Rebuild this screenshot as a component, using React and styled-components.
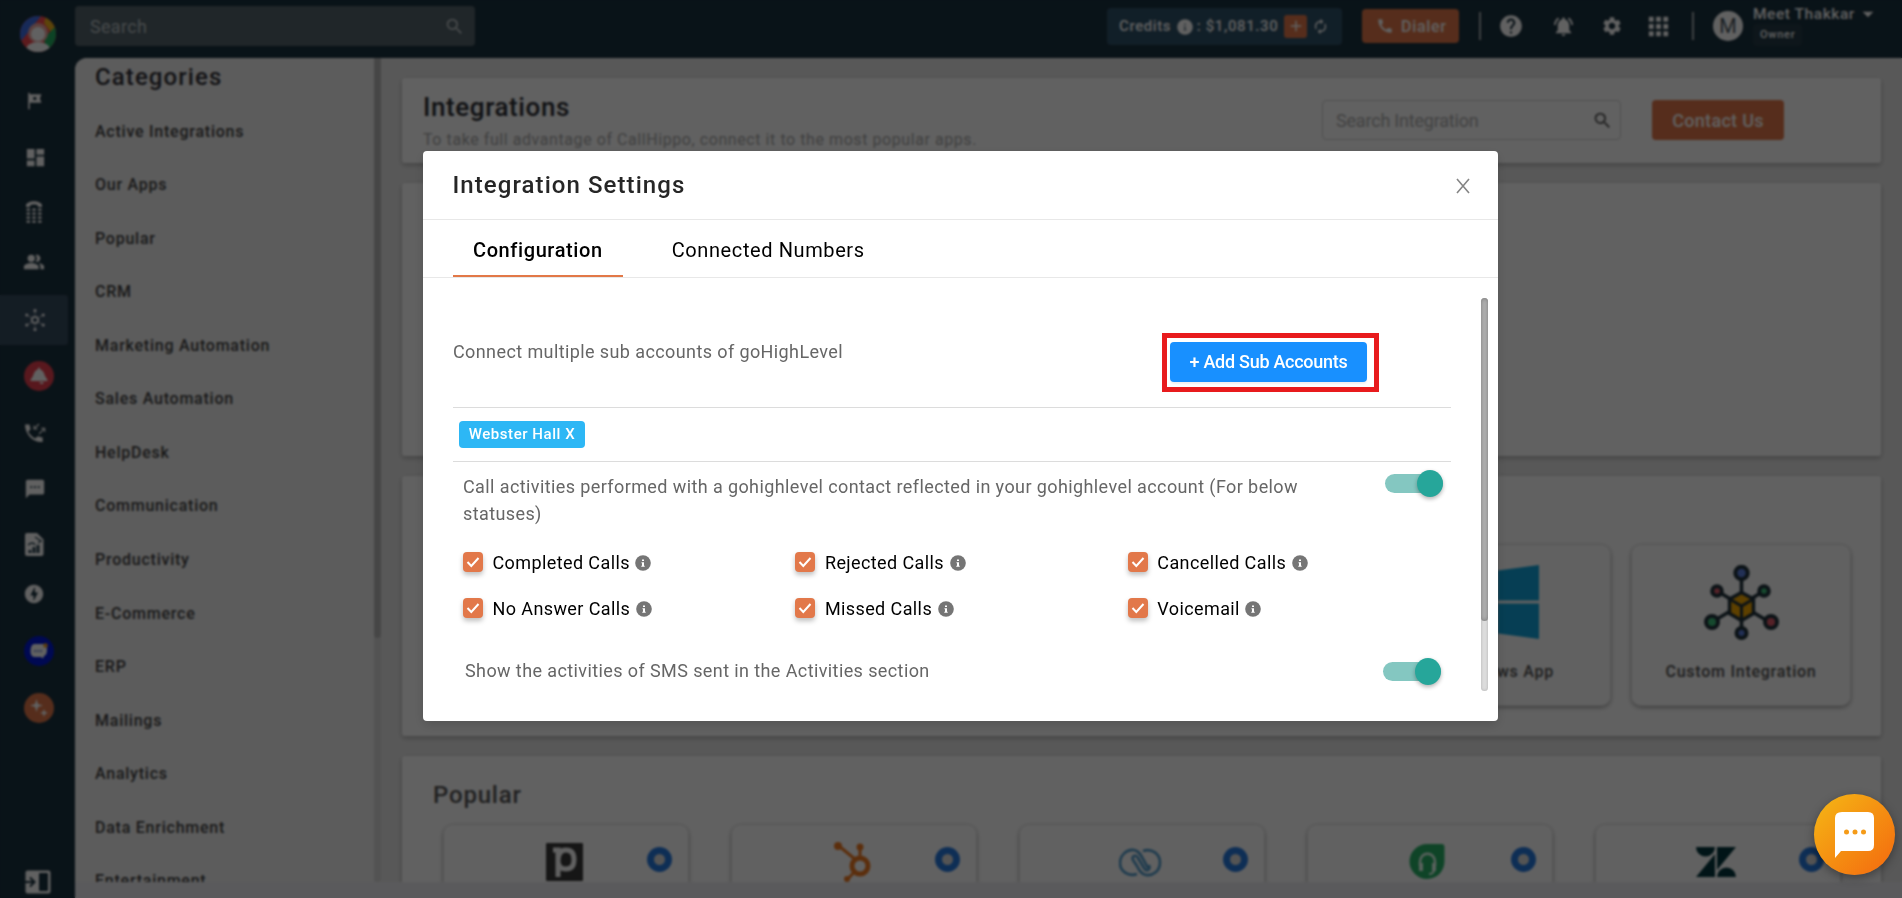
import React from "react";
import styled, { createGlobalStyle, css } from "styled-components";
import {
  MdTour, MdDashboard, MdPeopleAlt, MdSms, MdOfflineBolt, MdSearch, MdCall, MdHelp,
  MdNotificationsActive, MdSettings, MdApps, MdAutorenew, MdArrowDropDown, MdAdd,
} from "react-icons/md";

const GlobalStyle = createGlobalStyle`
  *, *::before, *::after { box-sizing: border-box; }
  body {
    margin: 0;
    overflow: hidden;
    font-family: Roboto, "Liberation Sans", sans-serif;
    background: #1b3240;
  }
  svg { display: block; flex: none; }
`;

/* ---------- shell ---------- */
const Shell = styled.div`
  display: flex;
  width: 1902px;
  height: 898px;
  background: #1a323f;
  overflow: hidden;
`;

const Rail = styled.nav`
  display: flex;
  flex-direction: column;
  width: 75px;
  height: 898px;
  padding: 16px 0 1px;
  color: #fff;
`;

const Logo = styled.div`
  display: flex;
  justify-content: center;
  height: 36px;
`;

const RailItem = styled.a`
  display: flex;
  align-items: center;
  justify-content: center;
  flex: none;
  width: 68px;
  height: ${(p) => (p.$active ? 50 : 30)}px;
  margin-top: ${(p) => p.$gap};
  border-radius: 0 3px 3px 0;
  background: ${(p) => (p.$active ? "#364c60" : "transparent")};
  padding-left: ${(p) => p.$shift || 0}px;
`;

const RailBadge = styled.span`
  display: flex;
  align-items: center;
  justify-content: center;
  width: 30px;
  height: 30px;
  border-radius: 50%;
  background: ${(p) => p.$color};
`;

const Column = styled.div`
  display: flex;
  flex-direction: column;
  flex: 1;
  min-width: 0;
`;

/* ---------- top bar ---------- */
const TopBar = styled.header`
  display: flex;
  align-items: center;
  height: 58px;
  padding-bottom: 6px;
  color: #fff;
`;

const GlobalSearch = styled.div`
  display: flex;
  align-items: center;
  justify-content: space-between;
  width: 400px;
  height: 40px;
  padding: 0 10px 0 15px;
  border-radius: 4px;
  background: #54646c;
  color: #bcc3c6;
  font-size: 18px;
  letter-spacing: 0.3px;
`;

const Credits = styled.div`
  display: flex;
  align-items: center;
  width: 235px;
  height: 37px;
  margin-left: 632px;
  padding-left: 12px;
  border-radius: 4px;
  background: #2f5269;
  font-size: 15px;
  font-weight: 500;
  letter-spacing: 0.6px;
  white-space: pre;

  > svg:first-of-type { margin: 2px 0 0 1px; }
`;

const AddCredit = styled.span`
  display: flex;
  align-items: center;
  justify-content: center;
  width: 23px;
  height: 23px;
  margin: 0 5px 0 6px;
  border-radius: 3px;
  background: #e2784a;
`;

const DialerButton = styled.button`
  display: flex;
  align-items: center;
  gap: 7px;
  width: 97px;
  height: 34px;
  margin-left: 20px;
  padding: 0 0 0 14px;
  border: 0;
  border-radius: 4px;
  background: #e2784a;
  color: #fff;
  font: 500 16px Roboto, sans-serif;
  letter-spacing: 0.7px;
`;

const Divider = styled.i`
  width: 2px;
  height: 28px;
  margin-left: ${(p) => p.$left}px;
  background: #a5acb0;
`;

const TopIcon = styled.span`
  display: flex;
  justify-content: center;
  width: 26px;
  margin-left: ${(p) => p.$left}px;
`;

const Avatar = styled.span`
  display: flex;
  align-items: center;
  justify-content: center;
  width: 30px;
  height: 30px;
  margin-left: 19px;
  border-radius: 50%;
  background: #fff;
  color: #46545c;
  font-size: 20px;
`;

const User = styled.div`
  display: flex;
  flex-direction: column;
  align-items: flex-start;
  height: 52px;
  margin-left: 10px;
  padding-top: 4px;
`;

const UserName = styled.div`
  display: flex;
  align-items: center;
  height: 20px;
  font-size: 15.5px;
  font-weight: 500;
  letter-spacing: 0.55px;
  white-space: nowrap;
`;

const Role = styled.span`
  height: 22px;
  padding: 0 7px;
  border-radius: 4px;
  background: #253b47;
  font-size: 11px;
  font-weight: 500;
  line-height: 22px;
  letter-spacing: 0.75px;
`;

/* ---------- page body ---------- */
const Body = styled.div`
  display: flex;
  height: 824px;
  border-top-left-radius: 12px;
  background: #e8e8e8;
  overflow: hidden;
`;

const BottomStrip = styled.div`
  height: 16px;
  background: #ededf2;
`;

const Categories = styled.aside`
  width: 299px;
  padding: 0.5px 0 0 20px;
  background: #f2f2f2;
`;

const CategoriesTitle = styled.h2`
  height: 46px;
  margin: 0;
  color: #303036;
  font-size: 24px;
  font-weight: 500;
  line-height: 36px;
  letter-spacing: 1.1px;
`;

const CategoryLink = styled.div`
  height: 53.57px;
  color: #414141;
  font-size: 16px;
  font-weight: 500;
  line-height: 53.57px;
  letter-spacing: 0.76px;
`;

const PageTrack = styled.div`
  width: 7px;
  height: 824px;
  border-radius: 4px;
  background: #dadada;
`;

const PageThumb = styled.div`
  height: 580px;
  border-radius: 0 0 4px 4px;
  background: #b9b9b9;
`;

const Content = styled.main`
  display: flex;
  flex-direction: column;
  gap: 20px;
  width: 1501px;
  padding: 20px 0 0 21px;
`;

const Card = styled.section`
  flex: none;
  width: 1479px;
  height: ${(p) => p.$h}px;
  border-radius: 3px;
  background: #fff;
  box-shadow: 0 2px 5px rgba(0, 0, 0, 0.25);
`;

const IntroCard = styled(Card)`
  display: flex;
  padding: 22px 0 0 21px;
`;

const Intro = styled.div`
  width: 899px;
`;

const IntroTitle = styled.h1`
  margin: -8px 0 0;
  color: #2b2d33;
  font-size: 26px;
  font-weight: 500;
  line-height: 31px;
  letter-spacing: 0.6px;
`;

const IntroText = styled.p`
  margin: 6px 0 0;
  color: #a8a8a8;
  font-size: 16px;
  line-height: 22px;
  letter-spacing: 0.57px;
  white-space: nowrap;
`;

const IntegrationSearch = styled.div`
  display: flex;
  align-items: center;
  justify-content: space-between;
  width: 299px;
  height: 40px;
  padding: 0 7px 0 13px;
  border: 1px solid #d2d2d2;
  border-radius: 4px;
  color: #aeaeae;
  font-size: 18px;
  letter-spacing: -0.2px;
`;

const ContactButton = styled.button`
  width: 132px;
  height: 40px;
  margin-left: 31px;
  border: 0;
  border-radius: 4px;
  background: #e2784a;
  color: #fff;
  font: 500 18px Roboto, sans-serif;
  letter-spacing: 0.3px;
`;

const AppsRow = styled.div`
  display: flex;
  justify-content: flex-end;
  gap: 20px;
  padding: 68px 30px 0 0;
`;

const tile = css`
  border: 1px solid #e2e2e2;
  border-radius: 10px;
  box-shadow: 0 2px 4px rgba(0, 0, 0, 0.32);
`;

const AppTile = styled.div`
  ${tile}
  display: flex;
  flex-direction: column;
  align-items: center;
  justify-content: space-between;
  width: 220px;
  height: 162px;
  padding: 20px 0 23px;
  color: #505050;
  font-size: 16px;
  line-height: 20px;
  letter-spacing: 0.75px;
  font-weight: 500;
`;

const PopularTitle = styled.h2`
  height: 68px;
  margin: 0;
  padding: 24px 0 0 31px;
  color: #555;
  font-size: 24px;
  font-weight: 500;
  line-height: 30px;
  letter-spacing: 0.8px;
`;

const PopularRow = styled.div`
  display: flex;
  gap: 42px;
  padding-left: 41px;
`;

const PopularTile = styled.div`
  ${tile}
  display: flex;
  justify-content: space-between;
  flex: none;
  width: 246px;
  height: 163px;
  padding: 16px 16px 0 99px;
`;

const InfoRing = styled.span`
  width: 25px;
  height: 25px;
  margin-top: 6px;
  border: 7.5px solid #267ae0;
  border-radius: 50%;
  background: #ddd;
`;

/* ---------- modal ---------- */
const Overlay = styled.div`
  position: fixed;
  inset: 0;
  display: flex;
  align-items: flex-start;
  padding: 151px 0 0 423px;
  background: rgba(0, 0, 0, 0.62);
  backdrop-filter: blur(1.2px);
`;

const Dialog = styled.div`
  width: 1075px;
  height: 570px;
  border-radius: 4px;
  background: #fff;
  box-shadow: 0 4px 12px rgba(0, 0, 0, 0.15);
`;

const DialogHeader = styled.div`
  display: flex;
  align-items: center;
  justify-content: space-between;
  height: 69px;
  padding: 0 27px 0 29.5px;
  border-bottom: 1px solid #e8e8e8;
`;

const DialogTitle = styled.div`
  color: #262626;
  font-size: 24px;
  font-weight: 500;
  letter-spacing: 1.07px;
`;

const Tabs = styled.div`
  display: flex;
  height: 58px;
  padding-left: 30px;
  border-bottom: 1px solid #e8e8e8;
`;

const Tab = styled.div`
  height: 57px;
  padding: 0 20px;
  margin-right: 29px;
  border-bottom: 2px solid ${(p) => (p.$active ? "#e27847" : "transparent")};
  color: #000;
  font-size: 20px;
  font-weight: ${(p) => (p.$active ? 500 : 400)};
  line-height: 61px;
  letter-spacing: 0.6px;
`;

const DialogBody = styled.div`
  display: flex;
  padding: 20px 0 0 30px;
`;

const Settings = styled.div`
  width: 998px;
`;

const ConnectRow = styled.div`
  display: flex;
  justify-content: space-between;
  height: 110px;
  padding: 35px 72px 0 0;
  border-bottom: 1px solid #dcdcdc;
`;

const Text = styled.div`
  width: ${(p) => (p.$w ? p.$w + "px" : "auto")};
  padding-top: ${(p) => p.$top || 0}px;
  color: #666;
  font-size: 18px;
  line-height: 27px;
  letter-spacing: 0.4px;
`;

const Highlight = styled.div`
  width: 217px;
  height: 59px;
  padding: 4px 3px;
  border: 5px solid #e81b1d;
`;

const AddButton = styled.button`
  width: 197px;
  height: 40px;
  padding: 0 0 2px;
  border: 0;
  border-radius: 4px;
  background: #1890ff;
  box-shadow: 0 2px 2px rgba(0, 0, 0, 0.06);
  color: #fff;
  font: 500 18px Roboto, sans-serif;
  letter-spacing: -0.28px;
`;

const TagRow = styled.div`
  height: 54px;
  padding: 13px 0 0 6px;
  border-bottom: 1px solid #dcdcdc;
`;

const Tag = styled.span`
  display: block;
  width: 126px;
  height: 27px;
  border-radius: 4px;
  background: #2db7f5;
  color: #fff;
  font-size: 15px;
  font-weight: 500;
  line-height: 26px;
  letter-spacing: 0.55px;
  text-align: center;
`;

const OptionRow = styled.div`
  display: flex;
  justify-content: space-between;
  padding: ${(p) => p.$pad};
`;

const Switch = styled.span`
  display: flex;
  align-items: center;
  justify-content: flex-end;
  width: 58px;
  height: 19px;
  margin-top: ${(p) => p.$top}px;
  border-radius: 10px;
  background: #84c7c1;

  &::after {
    content: "";
    flex: none;
    width: 26px;
    height: 27px;
    border-radius: 50%;
    background: #26a69a;
    box-shadow: 0 2px 4px rgba(0, 0, 0, 0.3);
  }
`;

const StatusGrid = styled.div`
  display: grid;
  grid-template-columns: repeat(3, 332.4px);
  grid-auto-rows: 46px;
  padding: 25px 0 0 10px;
`;

const Status = styled.div`
  display: flex;
  align-items: center;
  height: 20px;
  color: #000;
  font-size: 18px;
  letter-spacing: 0.4px;

  > svg { color: #757575; margin: 1px 0 0 5.5px; }
`;

const Check = styled.span`
  display: flex;
  align-items: center;
  justify-content: center;
  width: 20px;
  height: 20px;
  margin-right: 9.500px;
  border-radius: 4px;
  background: #e2784a;
  box-shadow: 0 3px 5px rgba(0, 0, 0, 0.25);
`;

const ScrollTrack = styled.div`
  width: 7px;
  height: 393px;
  margin-left: 30px;
  border-radius: 4px;
  background: #dcdcdc;
  box-shadow: inset 0 0 3px rgba(0, 0, 0, 0.2);
`;

const ScrollThumb = styled.div`
  height: 323px;
  border-radius: 4px;
  background: #b3b3b3;
  box-shadow: inset 0 0 4px rgba(0, 0, 0, 0.35);
`;

const ChatButton = styled.button`
  position: fixed;
  right: 7px;
  bottom: 23px;
  display: flex;
  align-items: center;
  justify-content: center;
  width: 81px;
  height: 81px;
  padding: 0;
  border: 0;
  border-radius: 50%;
  background: linear-gradient(135deg, #f5b014 10%, #f4700f 90%);
  box-shadow: 0 3px 10px rgba(0, 0, 0, 0.35);
`;

/* ---------- drawings ---------- */
const InfoDot = ({ mark = "#fff" }) => (
  <svg width="16" height="16" viewBox="0 0 16 16">
    <circle cx="8" cy="8" r="7.800" fill="currentColor" />
    <path d="M7 4.500h2v1.600H7zM6.500 7.200H9v3.500h.7v1H6.300v-1H7V8.200h-.5z" fill={mark} />
  </svg>
);

const LogoMark = () => (
  <svg width="36" height="36" viewBox="0 0 36 36">
    <defs><clipPath id="lg"><circle cx="18" cy="18" r="18" /></clipPath></defs>
    <g clipPath="url(#lg)">
      <rect width="36" height="36" fill="#f5484f" />
      <path d="M0 0H21L2 24H0z" fill="#3d6fe8" />
      <path d="M26 0L36 0V14L30 15 24 7z" fill="#f2b21b" />
      <path d="M24 22L36 10V36H26z" fill="#21b062" />
      <circle cx="18" cy="17" r="10" fill="#eda9a4" />
      <circle cx="18" cy="18" r="7" fill="#fff" />
      <ellipse cx="18" cy="34" rx="12" ry="8" fill="#fff" />
    </g>
  </svg>
);

const DeskPhone = () => (
  <svg width="18" height="24" viewBox="0 0 18 24" fill="#fff">
    <path d="M1 7V5C3 0 15 0 17 5v2h-4V5.500C11 4 7 4 5 5.500V7z" />
    {[8.5, 12.5, 16.5, 20.5].map((y) => [1.5, 7.2, 13].map((x) => (
      <rect key={x + "-" + y} x={x} y={y} width="3.600" height="2.200" rx=".4" />
    )))}
  </svg>
);

const HubMark = () => (
  <svg width="22" height="24" viewBox="0 0 22 24" fill="#fff">
    <circle cx="11" cy="12" r="3.200" fill="none" stroke="#fff" strokeWidth="1.800" />
    <circle cx="11" cy="2.500" r="1.600" /><circle cx="11" cy="21.500" r="1.600" />
    <circle cx="2.800" cy="7" r="1.600" /><circle cx="19.200" cy="7" r="1.600" />
    <circle cx="2.800" cy="17" r="1.600" /><circle cx="19.200" cy="17" r="1.600" />
    <path d="M4 7.800L7 9.500M18 7.800L15 9.500M4 16.200L7 14.500M18 16.200L15 14.500M11 4v3M11 17v3" stroke="#fff" strokeWidth=".6" />
  </svg>
);

const BellDome = () => (
  <svg width="18" height="18" viewBox="0 0 18 18" fill="#fff">
    <path d="M9 .5c.8 0 1 .7 1 1.800 2.800 1 4.200 3.500 5 6.700L17.500 13v1H.5v-1L3 9c.8-3.200 2.200-5.700 5-6.700C8 1.200 8.200.5 9 .5z" />
    <path d="M9 15h5l-1.500 2H11z" />
  </svg>
);

const CallArrows = () => (
  <svg width="22" height="22" viewBox="0 0 22 22" fill="#fff">
    <path d="M1 2.500h4.500l1.200 4.800-2.500 2.500c1.600 3 4 5 7 6.800l2.500-2.400 5 1.200V20C9 21 1 12 1 2.500z" />
    <path d="M15 2l-5 5M10 3.500V7h3.500M15 12l5.500-5.500M17 6.200h3.700V10" fill="none" stroke="#fff" strokeWidth="1.100" />
  </svg>
);

const Report = () => (
  <svg width="19" height="23" viewBox="0 0 19 23">
    <path d="M2 0h10l6.500 6.500V21q0 2-2 2H2q-2 0-2-2V2q0-2 2-2z" fill="#fff" />
    <path d="M5 20v-3M9 20v-6M13 20v-8" stroke="#2b4350" strokeWidth="3" />
    <path d="M3 12q5-4 7 0M10 4l6 4-3 2" fill="none" stroke="#2b4350" strokeWidth="1.500" />
  </svg>
);

const ChatMark = () => (
  <svg width="18" height="16" viewBox="0 0 18 16">
    <path d="M4 1h9q4 0 4 5.500T14 13l-1 2.500-2-1.500H5q-4.500 0-4.500-6T4 1z" fill="#fff" />
    <path d="M4 8h8" stroke="#8090d8" strokeWidth="2" strokeDasharray="2 1" />
    <circle cx="15.500" cy="2.500" r="2.300" fill="#f0a020" />
  </svg>
);

const Sparkles = () => (
  <svg width="18" height="18" viewBox="0 0 18 18" fill="#fff">
    <path d="M6.500 0L8 5l5 1.500L8 8l-1.500 5L5 8 0 6.500 5 5zM14 10l1 2.700L18 14l-3 1-1 3-1-3-3-1 3-1.300z" />
  </svg>
);

const ExpandRail = () => (
  <svg width="26" height="24" viewBox="0 0 26 24">
    <rect x=".5" y=".5" width="25" height="23" rx="2" fill="#fff" />
    <rect x="14" y="3" width="9" height="18" rx="1" fill="#1a323f" />
    <path d="M0 12h8M5 7.500l4.500 4.500L5 16.500" fill="none" stroke="#1a323f" strokeWidth="2" />
  </svg>
);

const WindowsMark = () => (
  <svg width="75" height="75" viewBox="0 0 75 75" fill="#10a4dc">
    <path d="M0 10.500L31 6v29.500H0zM34 5.600L75 0v35.500H34zM0 38.500h31V68L0 63.500zM34 38.500h41V74l-41-5.600z" />
  </svg>
);

const nodes = [
  [37.5, 8, 6.2, "#5b7fe0"], [13, 26, 4.8, "#e05a6a"], [60, 26, 4.8, "#3cc07a"],
  [8, 57, 6, "#3cc07a"], [67, 57, 6, "#e05a6a"], [37.5, 68, 5, "#5b7fe0"],
];

const NetworkMark = () => (
  <svg width="75" height="76" viewBox="0 0 75 76">
    <path d="M37.500 8v60M13 26l49 29M60 26L8 57" stroke="#20323c" strokeWidth="3.600" />
    <path d="M37.500 27.500L49.500 34v14.500L37.500 55.500 25.500 48.500V34z" fill="#f5a800" stroke="#20323c" strokeWidth="3.400" />
    <path d="M25.500 34l12 7 12-7M37.500 41v14" fill="none" stroke="#20323c" strokeWidth="3" />
    {nodes.map(([x, y, r, c]) => (
      <circle key={x + "-" + y} cx={x} cy={y} r={r} fill={c} stroke="#20323c" strokeWidth="4" />
    ))}
  </svg>
);

const brandIcons = [
  <svg key="p" width="44" height="40" viewBox="0 0 44 40">
    <rect x="3" y="2" width="37" height="38" rx="1" fill="#3a3a3a" />
    <path d="M10 9h5v27M15 20q0-11 8-11t8 9.500-8 9.500-8-8" fill="none" stroke="#fff" strokeWidth="5" />
  </svg>,
  <svg key="h" width="44" height="42" viewBox="0 0 44 42">
    <path d="M8 5l17 14M29 7v11M25 29l-9 10" stroke="#f07a22" strokeWidth="3" />
    <circle cx="29" cy="25" r="8" fill="none" stroke="#f07a22" strokeWidth="5" />
    <circle cx="7" cy="5" r="4" fill="#f07a22" /><circle cx="29" cy="6" r="3.500" fill="#f07a22" /><circle cx="16" cy="38" r="3" fill="#f07a22" />
  </svg>,
  <svg key="z" width="44" height="40" viewBox="0 0 44 40" fill="none" stroke="#4f9bcc" strokeWidth="2.600">
    <path d="M18 33C9 36 1 30 1 22S8 8 15 9c5 1 7 5 9 9l5 9" />
    <path d="M24 10c9-3 17 3 17 11.500S34 35 27 34c-5-1-7-5-9-9l-4-6c-2-4 3-6 5-2l6 10c2 4 7 2 5-3" />
  </svg>,
  <svg key="f" width="44" height="40" viewBox="0 0 44 40">
    <path d="M20.500 3h14q3 0 3 3v14a17.500 17.500 0 1 1-17-17z" fill="#28b368" />
    <path d="M13 25v-4c0-11 15-11 15 0v4" fill="none" stroke="#e8fff2" strokeWidth="2.500" />
    <path d="M12 22h4v8h-4zM25 22h4v8h-4z" fill="#e8fff2" /><path d="M27 30q-1 3-5 3" stroke="#e8fff2" strokeWidth="2" fill="none" />
  </svg>,
  <svg key="d" width="44" height="40" viewBox="0 0 44 40" fill="#03363d">
    <path d="M1 6h19a9.500 9.500 0 0 1-19 0zM20 13v23H1zM22 6h19L22 29zM22 36a9.500 9.500 0 0 1 19 0z" />
  </svg>,
];

const Tick = () => (
  <svg width="14" height="12" viewBox="0 0 14 12">
    <path d="M1.500 6l3.800 4L12.500 2" fill="none" stroke="#fff" strokeWidth="2" />
  </svg>
);

const CloseIcon = () => (
  <svg width="16" height="18" viewBox="0 0 16 18">
    <path d="M2 3l12 14M14 3L2 17" stroke="#858585" strokeWidth="1.600" />
  </svg>
);

const categories = [
  "Active Integrations", "Our Apps", "Popular", "CRM", "Marketing Automation", "Sales Automation",
  "HelpDesk", "Communication", "Productivity", "E-Commerce", "ERP", "Mailings", "Analytics",
  "Data Enrichment", "Entertainment",
];

const statuses = [
  "Completed Calls", "Rejected Calls", "Cancelled Calls", "No Answer Calls", "Missed Calls", "Voicemail",
];

export default function App() {
  return (
    <>
      <GlobalStyle />
      <Shell>
        <Rail>
          <Logo><LogoMark /></Logo>
          <RailItem $gap="34px"><MdTour size={20} /></RailItem>
          <RailItem $gap="26px" $shift={2}><MdDashboard size={23} /></RailItem>
          <RailItem $gap="25px"><DeskPhone /></RailItem>
          <RailItem $gap="20px"><MdPeopleAlt size={22} /></RailItem>
          <RailItem $gap="18px" $shift={2} $active><HubMark /></RailItem>
          <RailItem $gap="16px" $shift={10}><RailBadge $color="#e8404f"><BellDome /></RailBadge></RailItem>
          <RailItem $gap="27px" $shift={2}><CallArrows /></RailItem>
          <RailItem $gap="26px" $shift={2}><MdSms size={22} /></RailItem>
          <RailItem $gap="25px"><Report /></RailItem>
          <RailItem $gap="20px"><MdOfflineBolt size={22} /></RailItem>
          <RailItem $gap="27px" $shift={10}><RailBadge $color="#0018d8"><ChatMark /></RailBadge></RailItem>
          <RailItem $gap="27px" $shift={10}><RailBadge $color="#e2784a"><Sparkles /></RailBadge></RailItem>
          <RailItem $gap="auto" $shift={8}><ExpandRail /></RailItem>
        </Rail>
        <Column>
          <TopBar>
            <GlobalSearch>Search<MdSearch size={21} /></GlobalSearch>
            <Credits>
              Credits <InfoDot mark="#8b9aa4" />{" : $1,081.30"}
              <AddCredit><MdAdd size={18} /></AddCredit>
              <MdAutorenew size={17} />
            </Credits>
            <DialerButton><MdCall size={18} />Dialer</DialerButton>
            <Divider $left={20} />
            <TopIcon $left={17}><MdHelp size={26} /></TopIcon>
            <TopIcon $left={26}><MdNotificationsActive size={23} /></TopIcon>
            <TopIcon $left={23}><MdSettings size={22} /></TopIcon>
            <TopIcon $left={20}><MdApps size={29} /></TopIcon>
            <Divider $left={21} />
            <Avatar>M</Avatar>
            <User>
              <UserName>Meet Thakkar<MdArrowDropDown size={26} /></UserName>
              <Role>Owner</Role>
            </User>
          </TopBar>
          <Body>
            <Categories>
              <CategoriesTitle>Categories</CategoriesTitle>
              {categories.map((c) => <CategoryLink key={c}>{c}</CategoryLink>)}
            </Categories>
            <PageTrack><PageThumb /></PageTrack>
            <Content>
              <IntroCard $h={85}>
                <Intro>
                  <IntroTitle>Integrations</IntroTitle>
                  <IntroText>To take full advantage of CallHippo, connect it to the most popular apps.</IntroText>
                </Intro>
                <IntegrationSearch>Search Integration<MdSearch size={21} color="#555" /></IntegrationSearch>
                <ContactButton>Contact Us</ContactButton>
              </IntroCard>
              <Card $h={273} />
              <Card $h={260}>
                <AppsRow>
                  <AppTile><WindowsMark />Windows App</AppTile>
                  <AppTile><NetworkMark />Custom Integration</AppTile>
                </AppsRow>
              </Card>
              <Card $h={300}>
                <PopularTitle>Popular</PopularTitle>
                <PopularRow>
                  {brandIcons.map((icon) => (
                    <PopularTile key={icon.key}>{icon}<InfoRing /></PopularTile>
                  ))}
                </PopularRow>
              </Card>
            </Content>
          </Body>
          <BottomStrip />
        </Column>
      </Shell>
      <Overlay>
        <Dialog>
          <DialogHeader>
            <DialogTitle>Integration Settings</DialogTitle>
            <CloseIcon />
          </DialogHeader>
          <Tabs>
            <Tab $active>Configuration</Tab>
            <Tab>Connected Numbers</Tab>
          </Tabs>
          <DialogBody>
            <Settings>
              <ConnectRow>
                <Text $top={5}>Connect multiple sub accounts of goHighLevel</Text>
                <Highlight><AddButton>+ Add Sub Accounts</AddButton></Highlight>
              </ConnectRow>
              <TagRow><Tag>Webster Hall X</Tag></TagRow>
              <OptionRow $pad="11px 8px 0 10px">
                <Text $w={850}>
                  Call activities performed with a gohighlevel contact reflected in your gohighlevel account (For below statuses)
                </Text>
                <Switch $top={1} />
              </OptionRow>
              <StatusGrid>
                {statuses.map((s) => (
                  <Status key={s}><Check><Tick /></Check>{s}<InfoDot /></Status>
                ))}
              </StatusGrid>
              <OptionRow $pad="13px 10px 0 12px">
                <Text>Show the activities of SMS sent in the Activities section</Text>
                <Switch $top={5} />
              </OptionRow>
            </Settings>
            <ScrollTrack><ScrollThumb /></ScrollTrack>
          </DialogBody>
        </Dialog>
      </Overlay>
      <ChatButton aria-label="Chat">
        <svg width="40" height="46" viewBox="0 0 40 46">
          <path d="M7 0h26q6 0 6 6v27q0 6-6 6H6l-6 7V6q0-6 7-6z" fill="#fff" />
          <circle cx="11.500" cy="20" r="2.500" fill="#f59b18" />
          <circle cx="20" cy="20" r="2.500" fill="#f59b18" />
          <circle cx="28.500" cy="20" r="2.500" fill="#f59b18" />
        </svg>
      </ChatButton>
    </>
  );
}
